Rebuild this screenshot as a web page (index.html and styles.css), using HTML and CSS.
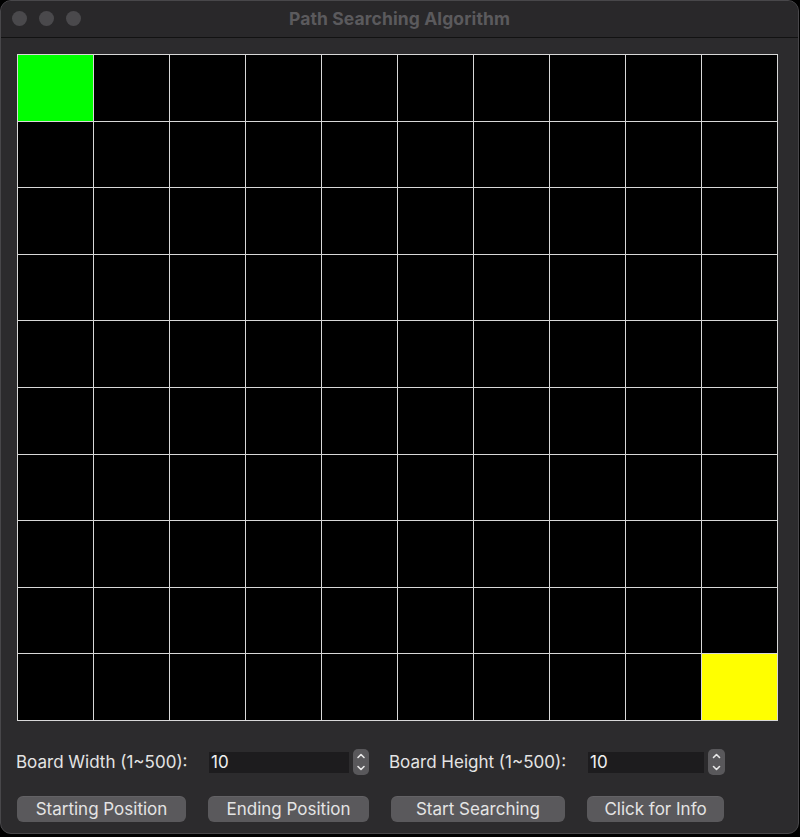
FILE: index.html
```html
<!DOCTYPE html>
<html>
<head>
<meta charset="utf-8">
<link rel="stylesheet" href="styles.css">
</head>
<body>
<div class="window">
  <div class="titlebar">
    <div class="lights"><span class="light"></span><span class="light"></span><span class="light"></span></div>
    <div class="title">Path Searching Algorithm</div>
  </div>
  <div class="content">
    <div class="board" id="board"></div>
    <div class="controls">
      <div class="label l1">Board Width (1~500):</div>
      <div class="field f1">10</div>
      <div class="stepper s1">
        <svg viewBox="0 0 16 26" width="16" height="26"><path d="M5 8.5 L8 5.5 L11 8.5" /><path d="M5 17.5 L8 20.5 L11 17.5" /></svg>
      </div>
      <div class="label l2">Board Height (1~500):</div>
      <div class="field f2">10</div>
      <div class="stepper s2">
        <svg viewBox="0 0 17 26" width="17" height="26"><path d="M5.5 8.5 L8.5 5.5 L11.5 8.5" /><path d="M5.5 17.5 L8.5 20.5 L11.5 17.5" /></svg>
      </div>
    </div>
    <div class="buttons">
      <div class="btn b1">Starting Position</div>
      <div class="btn b2">Ending Position</div>
      <div class="btn b3">Start Searching</div>
      <div class="btn b4">Click for Info</div>
    </div>
  </div>
</div>
<script src="app.js"></script>
</body>
</html>
```
FILE: app.js
```js
const board = document.getElementById('board');
for (let r = 0; r < 10; r++) {
  for (let c = 0; c < 10; c++) {
    const d = document.createElement('div');
    d.className = 'cell';
    if (r === 0 && c === 0) d.classList.add('start');
    if (r === 9 && c === 9) d.classList.add('end');
    board.appendChild(d);
  }
}
```
FILE: styles.css
```css
html, body {
  margin: 0;
  padding: 0;
  background: #000;
}
body {
  width: 800px;
  height: 837px;
  font-family: Inter, "Noto Sans", sans-serif;
}
.window {
  width: 797px;
  height: 832px;
  background: #2c2b2d;
  border: 1px solid #48474a;
  border-radius: 11px;
  overflow: hidden;
}
.titlebar {
  height: 36px;
  background: #29282a;
  border-bottom: 1px solid #121212;
  position: relative;
  display: flex;
  align-items: center;
  justify-content: center;
}
.lights {
  position: absolute;
  left: 11px;
  top: 10px;
  display: flex;
  gap: 12px;
}
.light {
  width: 15px;
  height: 15px;
  border-radius: 50%;
  background: #4a494c;
}
.title {
  color: #5b5a5d;
  font-weight: 700;
  font-size: 17.5px;
  letter-spacing: 0.1px;
  margin-top: -2px;
}
.content {
  padding: 16px 0 0 16px;
}
.board {
  width: 761px;
  height: 667px;
  box-sizing: border-box;
  background: #d8d8d8;
  padding: 1px;
  display: grid;
  grid-template-columns: repeat(10, 1fr);
  grid-template-rows: repeat(10, 1fr);
  gap: 1px;
}
.cell {
  background: #000;
}
.cell.start { background: #00ff00; }
.cell.end { background: #ffff00; }
.controls {
  margin-top: 28px;
  display: flex;
  align-items: center;
  height: 26px;
}
.label {
  color: #e4e4e4;
  font-size: 17px;
  white-space: nowrap;
}
.l1 { width: 193px; margin-left: -1px; }
.l2 { width: 199px; margin-left: 20px; }
.field {
  height: 21px;
  background: #1d1c1e;
  color: #f0f0f0;
  font-size: 17px;
  line-height: 21px;
  padding-left: 2px;
  box-sizing: border-box;
}
.f1 { width: 140px; }
.f2 { width: 116px; }
.stepper {
  margin-left: 4px;
  height: 26px;
  background: #59585b;
  border-radius: 5px;
  display: flex;
}
.s1 { width: 16px; }
.s2 { width: 17px; }
.stepper svg path {
  fill: none;
  stroke: #e8e8e8;
  stroke-width: 1.6;
  stroke-linecap: round;
  stroke-linejoin: round;
}
.buttons {
  margin-top: 21px;
  display: flex;
  gap: 22px;
}
.btn {
  height: 26px;
  background: #5a595c;
  border-radius: 6px;
  color: #e4e4e4;
  font-size: 17px;
  line-height: 26px;
  text-align: center;
  box-shadow: inset 0 1px 0 rgba(255,255,255,0.06);
}
.b1 { width: 169px; }
.b2 { width: 161px; }
.b3 { width: 174px; }
.b4 { width: 137px; }
```
